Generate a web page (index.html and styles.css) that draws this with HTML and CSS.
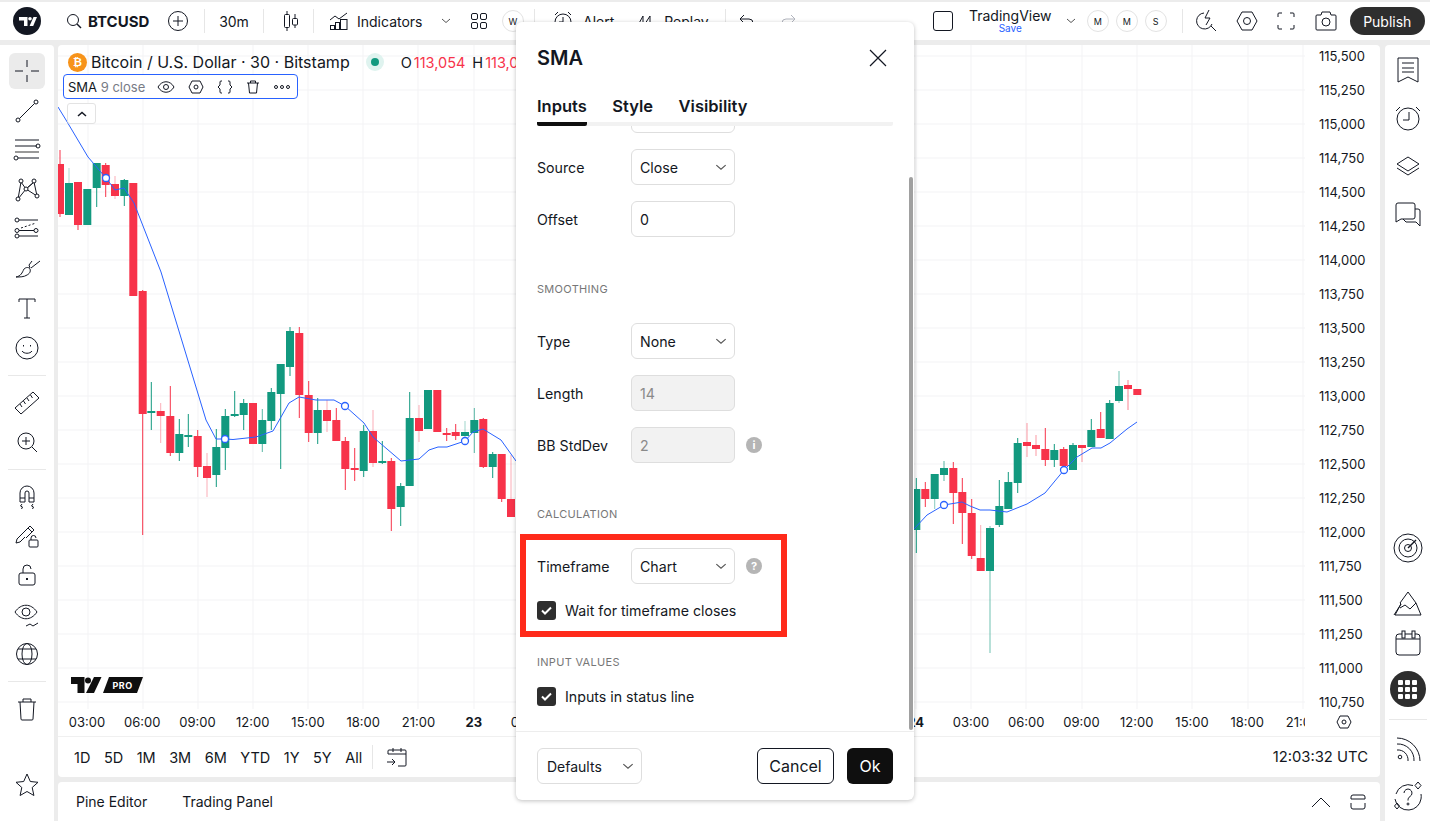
FILE: index.html
```html
<!DOCTYPE html>
<html lang="en">
  <head>
    <meta charset="UTF-8" />
    <title>BTCUSD SMA settings</title>
    <link rel="stylesheet" href="styles.css">
  </head>
  <body>
    <header class="topbar">
      <div class="logo">
        <svg width="28" height="28" viewBox="0 0 28 28"><circle cx="14" cy="14" r="14" fill="#131722"/><path d="M6 10h8.5v9H11v-5.500H6z" fill="#fff"/><circle cx="17" cy="11.800" r="1.800" fill="#fff"/><path d="M20.500 10H24l-3.800 9h-3.600z" fill="#fff"/></svg>
      </div>
      <div class="symbol">
        <svg class="ico" width="16" height="16" viewBox="0 0 16 16"><circle cx="7" cy="7" r="5.500"/><path d="M11 11l4 4" stroke-width="1.500"/></svg>
        <span>BTCUSD</span>
      </div>
      <div class="tb-btn add">
        <svg class="ico" width="22" height="22" viewBox="0 0 22 22"><circle cx="11" cy="11" r="9.500"/><path d="M11 6v10M6 11h10"/></svg>
      </div>
      <i class="sep sep-a"></i>
      <div class="tb-btn interval">30m</div>
      <i class="sep"></i>
      <div class="tb-btn candles">
        <svg class="ico" width="18" height="22" viewBox="0 0 18 22"><path d="M5 1v3M5 18v3M13 4v4M13 15v3"/><rect x="2.500" y="4.500" width="5" height="13" rx="1"/><rect x="10.500" y="8.500" width="5" height="6.500" rx="1"/></svg>
      </div>
      <i class="sep"></i>
      <div class="indicators">
        <svg class="ico" width="20" height="20" viewBox="0 0 20 20"><path d="M1 9l5-4 4 3 8-6"/><rect x="1.500" y="14.500" width="4" height="4"/><rect x="6.500" y="11.500" width="4" height="7"/><rect x="11.500" y="8.500" width="6.500" height="10"/></svg>
        <span>Indicators</span>
        <svg class="ico chev" width="10" height="6" viewBox="0 0 10 6"><path d="M1 1l4 3.500L9 1"/></svg>
      </div>
      <div class="tb-btn layouts">
        <svg class="ico" width="20" height="20" viewBox="0 0 20 20"><rect x="2.500" y="2.500" width="6" height="6" rx="1.500"/><rect x="11.500" y="2.500" width="6" height="6" rx="1.500"/><rect x="2.500" y="11.500" width="6" height="6" rx="1.500"/><rect x="11.500" y="11.500" width="6" height="6" rx="1.500"/></svg>
      </div>
      <div class="round-tag tag-w">W</div>
      <i class="sep sep-b"></i>
      <div class="action alert">
        <svg class="ico" width="22" height="22" viewBox="0 0 22 22"><circle cx="11" cy="12" r="8"/><path d="M11 7v5H7M3 5l3-3M19 5l-3-3"/></svg>
        <span>Alert</span>
      </div>
      <div class="action replay">
        <svg class="ico" width="18" height="18" viewBox="0 0 18 18"><path d="M2 15L8 4v11l7-11v11"/></svg>
        <span>Replay</span>
      </div>
      <i class="sep sep-c"></i>
      <div class="tb-btn undo">
        <svg class="ico" width="18" height="18" viewBox="0 0 18 18"><path d="M6 3L2 7l4 4M2 7h9a4 4 0 0 1 0 8H8"/></svg>
      </div>
      <div class="tb-btn redo">
        <svg class="ico faint" width="18" height="18" viewBox="0 0 18 18"><path d="M12 3l4 4-4 4M16 7H7a4 4 0 0 0 0 8h3"/></svg>
      </div>

      <div class="layout-box"></div>
      <div class="layout-name">
        <span>TradingView</span>
        <small>Save</small>
      </div>
      <svg class="ico chev layout-chev" width="10" height="6" viewBox="0 0 10 6"><path d="M1 1l4 3.500L9 1"/></svg>
      <div class="round-tag">M</div>
      <div class="round-tag">M</div>
      <div class="round-tag">S</div>
      <i class="sep sep-d"></i>
      <div class="tb-icons">
        <svg class="ico" width="22" height="24" viewBox="0 0 22 24"><path d="M8 4a8 8 0 1 0 8 11M13 1l-4 8h5l-4 7M15 17l5 5"/></svg>
        <svg class="ico" width="22" height="24" viewBox="0 0 22 24"><path d="M6 3h10l5 9-5 9H6l-5-9z"/><circle cx="11" cy="12" r="3.500"/></svg>
        <svg class="ico" width="20" height="20" viewBox="0 0 20 20"><path d="M2 6V3a1 1 0 0 1 1-1h3M14 2h3a1 1 0 0 1 1 1v3M18 14v3a1 1 0 0 1-1 1h-3M6 18H3a1 1 0 0 1-1-1v-3"/></svg>
        <svg class="ico" width="24" height="24" viewBox="0 0 24 24"><path d="M3 6h4l1-3h8l1 3h4a1 1 0 0 1 1 1v13a1 1 0 0 1-1 1H3a1 1 0 0 1-1-1V7a1 1 0 0 1 1-1z"/><circle cx="12" cy="13" r="4"/></svg>
      </div>
      <button class="publish">Publish</button>
    </header>

    <div class="main">
      <nav class="left-bar">
        <div class="tool active">
          <svg class="ico" width="28" height="28" viewBox="0 0 28 28"><path d="M14 3v7M14 18v7M2 14h8M18 14h8"/></svg>
        </div>
        <div class="tool">
          <svg class="ico" width="28" height="28" viewBox="0 0 28 28"><circle cx="5" cy="23" r="2"/><circle cx="23" cy="5" r="2"/><path d="M6.500 21.500l15-15"/></svg>
        </div>
        <div class="tool">
          <svg class="ico" width="28" height="28" viewBox="0 0 28 28"><path d="M2 4h24M2 10h22M5 22h21"/><path d="M2 16h24" stroke="#777" stroke-width="1.500"/><circle cx="25" cy="10" r="2"/><circle cx="3" cy="22" r="2"/></svg>
        </div>
        <div class="tool">
          <svg class="ico" width="28" height="28" viewBox="0 0 28 28"><path d="M8 6l5 7L21 6l3 14M8 6L5 23l8-10 11 7M21 6l-8 7"/><circle cx="8" cy="5" r="2" fill="#fff"/><circle cx="21" cy="5" r="2" fill="#fff"/><circle cx="13" cy="13" r="2" fill="#fff"/><circle cx="5" cy="23" r="2" fill="#fff"/><circle cx="24" cy="20" r="2" fill="#fff"/></svg>
        </div>
        <div class="tool">
          <svg class="ico" width="28" height="28" viewBox="0 0 28 28"><path d="M6 5h19M6 15.500h15M6 21h19"/><path d="M8 13l15-5" stroke-dasharray="2 2"/><circle cx="4" cy="5" r="2"/><circle cx="4" cy="15.500" r="2"/><circle cx="23" cy="15.500" r="2"/><circle cx="4" cy="21" r="2"/></svg>
        </div>
        <div class="tool">
          <svg class="ico" width="28" height="28" viewBox="0 0 28 28"><path d="M3 22c5-1 6-4 8-8 2-2 5-2 6 0 1 3-1 5-3 6-3 2-7 2-11 2zM16 10l1 3M18 13l9-7M16 10l3-4"/></svg>
        </div>
        <div class="tool">
          <svg class="ico" width="28" height="28" viewBox="0 0 28 28"><path d="M6 8V5h16v3M14 5v19M11 24h6"/></svg>
        </div>
        <div class="tool">
          <svg class="ico" width="28" height="28" viewBox="0 0 28 28"><circle cx="14" cy="14" r="11"/><path d="M9 17c2 3 8 3 10 0M10.500 11v1.500M17.500 11v1.500"/></svg>
        </div>
        <hr class="bar-line" />
        <div class="tool">
          <svg class="ico" width="28" height="28" viewBox="0 0 28 28"><path d="M2 20L20 4l6 6-18 16zM7 16l2 3M10.500 13l2 3M14 10l2 3M17.500 7l2 3"/></svg>
        </div>
        <div class="tool">
          <svg class="ico" width="28" height="28" viewBox="0 0 28 28"><circle cx="13" cy="13" r="8"/><path d="M13 9v8M9 13h8M19 19l5 5"/></svg>
        </div>
        <hr class="bar-line" />
        <div class="tool">
          <svg class="ico" width="28" height="28" viewBox="0 0 28 28"><path d="M7 20V11a7 7 0 0 1 14 0v9h-5V11a2 2 0 0 0-4 0v9zM7 16h5M16 16h5M9 22l-1.500 2 2 1-1 2M20 22l-1.500 2 2 1-1 2"/></svg>
        </div>
        <div class="tool">
          <svg class="ico" width="28" height="28" viewBox="0 0 28 28"><path d="M3 21l1-4L17 4l4 4-8 8M3 21l4-1 5-5M15 6l4 4"/><rect x="16" y="18" width="9" height="7" rx="1"/><path d="M18 18v-2a2.500 2.500 0 0 1 5 0"/></svg>
        </div>
        <div class="tool">
          <svg class="ico" width="28" height="28" viewBox="0 0 28 28"><rect x="6" y="12" width="16" height="12" rx="2"/><path d="M10 12V8a4 4 0 0 1 8 0"/><path d="M14 17v2" stroke-width="2"/></svg>
        </div>
        <div class="tool">
          <svg class="ico" width="28" height="28" viewBox="0 0 28 28"><path d="M2 11c6-9 16-9 22 0-6 9-16 9-22 0z"/><circle cx="13" cy="11" r="4"/><path d="M13 25l4-2 3 2 5-3"/></svg>
        </div>
        <div class="tool">
          <svg class="ico" width="28" height="28" viewBox="0 0 28 28"><circle cx="14" cy="14" r="10.500"/><ellipse cx="14" cy="14" rx="5" ry="10.500"/><path d="M5 9h18M5 19h18"/></svg>
        </div>
        <hr class="bar-line" />
        <div class="tool">
          <svg class="ico" width="28" height="28" viewBox="0 0 28 28"><path d="M5 7h18M10 7V4h8v3M7 7l1 17a1 1 0 0 0 1 1h10a1 1 0 0 0 1-1l1-17"/></svg>
        </div>
        <div class="tool star">
          <svg class="ico" width="28" height="28" viewBox="0 0 28 28"><path d="M14 3l3.300 7.500 7.700.8-5.800 5.200 1.700 8L14 20.500 7.100 24.500l1.700-8L3 11.300l7.700-.8z"/></svg>
        </div>
      </nav>

      <div class="center">
        <section class="chart-card">
          <div class="chart-row">
            <div class="plot">
              <svg id="chart" class="chart-svg" width="1247" height="664" viewBox="58 45 1247 664"></svg>

              <div class="legend-title">
                <span class="coin">₿</span>
                <span class="pair">Bitcoin / U.S. Dollar · 30 · Bitstamp</span>
                <span class="live"><i></i></span>
                <span class="ohlc">O<b>113,054</b></span>
                <span class="ohlc">H<b>113,054</b></span>
              </div>

              <div class="study-chip">
                <span class="study-name">SMA <em>9 close</em></span>
                <svg class="ico" width="18" height="14" viewBox="0 0 18 14"><path d="M1 7c4-7 12-7 16 0-4 7-12 7-16 0z"/><circle cx="9" cy="7" r="2.500"/></svg>
                <svg class="ico" width="16" height="14" viewBox="0 0 16 14"><path d="M4 1h8l3 6-3 6H4L1 7z"/><circle cx="8" cy="7" r="2"/></svg>
                <svg class="ico" width="16" height="14" viewBox="0 0 16 14"><path d="M5 1H4a1 1 0 0 0-1 1v3L1 7l2 2v3a1 1 0 0 0 1 1h1M11 1h1a1 1 0 0 1 1 1v3l2 2-2 2v3a1 1 0 0 1-1 1h-1"/></svg>
                <svg class="ico" width="14" height="14" viewBox="0 0 14 14"><path d="M1 3h12M4.500 3V1h5v2M2.500 3l1 10h7l1-10"/></svg>
                <svg class="ico" width="18" height="14" viewBox="0 0 18 14"><circle cx="3" cy="7" r="1.500"/><circle cx="9" cy="7" r="1.500"/><circle cx="15" cy="7" r="1.500"/></svg>
              </div>

              <div class="collapse">
                <svg class="ico" width="10" height="6" viewBox="0 0 10 6"><path d="M1 5l4-3.500L9 5" stroke-width="1.500"/></svg>
              </div>

              <svg class="tv-pro" width="72" height="16" viewBox="0 0 72 16">
                <path d="M0 0h13.500v16H6.500V7H0z"/>
                <circle cx="17" cy="3.500" r="3"/>
                <path d="M23 0h7.500L23 16h-8zM38 0h34l-6 16H32z"/>
                <text x="51.500" y="11.500" text-anchor="middle">PRO</text>
              </svg>
            </div>

            <div class="price-scale">
              <span>115,500</span><span>115,250</span><span>115,000</span><span>114,750</span>
              <span>114,500</span><span>114,250</span><span>114,000</span><span>113,750</span>
              <span>113,500</span><span>113,250</span><span>113,000</span><span>112,750</span>
              <span>112,500</span><span>112,250</span><span>112,000</span><span>111,750</span>
              <span>111,500</span><span>111,250</span><span>111,000</span><span>110,750</span>
            </div>
          </div>

          <div class="time-row">
            <div class="time-labels">
              <span>03:00</span><span>06:00</span><span>09:00</span><span>12:00</span>
              <span>15:00</span><span>18:00</span><span>21:00</span><span class="day">23</span>
              <span>03:00</span><span>06:00</span><span>09:00</span><span>12:00</span>
              <span>15:00</span><span>18:00</span><span>21:00</span><span class="day">24</span>
              <span>03:00</span><span>06:00</span><span>09:00</span><span>12:00</span>
              <span>15:00</span><span>18:00</span><span>21:00</span>
            </div>
            <div class="axis-gear">
              <svg class="ico" width="16" height="14" viewBox="0 0 16 14"><path d="M4 1h8l3 6-3 6H4L1 7z"/><circle cx="8" cy="7" r="2"/></svg>
            </div>
          </div>

          <div class="range-row">
            <span>1D</span><span>5D</span><span>1M</span><span>3M</span><span>6M</span>
            <span>YTD</span><span>1Y</span><span>5Y</span><span>All</span>
            <i class="range-sep"></i>
            <svg class="ico" width="22" height="22" viewBox="0 0 22 22"><path d="M2 8V5a1 1 0 0 1 1-1h16a1 1 0 0 1 1 1v14a1 1 0 0 1-1 1h-7M2 8h18M7 2v4M15 2v4M1 16h8M6 13l3 3-3 3"/></svg>
            <span class="clock">12:03:32 UTC</span>
          </div>
        </section>

        <section class="bottom-panel">
          <span>Pine Editor</span>
          <span>Trading Panel</span>
          <div class="panel-icons">
            <svg class="ico" width="20" height="12" viewBox="0 0 20 12"><path d="M1 11l9-9 9 9"/></svg>
            <svg class="ico" width="18" height="16" viewBox="0 0 18 16"><path d="M4 1h10a2 2 0 0 1 2 2v2H2V3a2 2 0 0 1 2-2zM2 9v4a2 2 0 0 0 2 2h10a2 2 0 0 0 2-2V9"/></svg>
          </div>
        </section>
      </div>

      <aside class="right-bar">
        <div class="side">
          <svg class="ico" width="24" height="26" viewBox="0 0 24 26"><path d="M2 1h20v24l-10-5-10 5zM6 6h12M6 11h12M6 15h12"/></svg>
        </div>
        <div class="side">
          <svg class="ico" width="28" height="28" viewBox="0 0 28 28"><circle cx="14" cy="15" r="11"/><path d="M15 8v8H9M2 7l4-4M26 7l-4-4"/></svg>
        </div>
        <div class="side">
          <svg class="ico" width="28" height="24" viewBox="0 0 28 24"><path d="M14 3l11 7-11 7-11-7zM3 14l11 7 11-7"/></svg>
        </div>
        <div class="side">
          <svg class="ico" width="28" height="28" viewBox="0 0 28 28"><path d="M2 22V5a2 2 0 0 1 2-2h15a2 2 0 0 1 2 2v12a2 2 0 0 1-2 2H7zM21 9h3a2 2 0 0 1 2 2v15l-4-4H12l-3-3"/></svg>
        </div>
        <div class="side side-low">
          <svg class="ico" width="30" height="30" viewBox="0 0 30 30"><circle cx="15" cy="15" r="14"/><circle cx="15" cy="15" r="9"/><circle cx="15" cy="15" r="3.500"/><path d="M15 15l8-8" stroke-width="1.500"/></svg>
        </div>
        <div class="side side-tight mountain">
          <svg class="ico" width="30" height="26" viewBox="0 0 30 26"><path d="M1 25L8 14l-1-1L15 2l8 11-6 6-5-4-5 3M8 14l-6 11h26l-5-12"/></svg>
        </div>
        <div class="side side-tight">
          <svg class="ico" width="28" height="28" viewBox="0 0 28 28"><rect x="2" y="5" width="24" height="21" rx="3"/><path d="M2 10h24"/><rect x="8" y="2" width="3" height="7" fill="#fff"/><rect x="18" y="2" width="3" height="7" fill="#fff"/></svg>
        </div>
        <div class="apps">
          <i></i><i></i><i></i><i></i><i></i><i></i><i></i><i></i><i></i>
        </div>
        <hr class="bar-line side-line" />
        <div class="side">
          <svg class="ico" width="26" height="26" viewBox="0 0 26 26"><circle cx="5" cy="21" r="1.800"/><path d="M2 14a10 10 0 0 1 11 11M2 8a16 16 0 0 1 17 17M2 2a23 23 0 0 1 23 23"/></svg>
        </div>
        <div class="side">
          <svg class="ico" width="32" height="32" viewBox="0 0 32 32"><path d="M21 4.500A13 13 0 0 0 4 13M3 18a13 13 0 0 0 14 11 13 13 0 0 0 12-11 13 13 0 0 0 0-5"/><path d="M12 12a4 4 0 1 1 6 3.500c-1.500 1-2 2-2 4"/><circle cx="16" cy="23" r="1"/><path d="M26 1l3 3.500-3 3.500-3-3.500zM5 22l2.500 3L5 28l-2.500-3z"/></svg>
        </div>
      </aside>
    </div>

    <div class="dialog">
      <div class="dialog-head">
        <h2>SMA</h2>
        <svg class="ico" width="18" height="18" viewBox="0 0 18 18"><path d="M1 1l16 16M17 1L1 17" stroke-width="1.200"/></svg>
      </div>
      <div class="tabs">
        <span class="tab on">Inputs</span>
        <span class="tab">Style</span>
        <span class="tab">Visibility</span>
      </div>
      <div class="dialog-body">
        <div class="field-row clipped">
          <div class="field"></div>
        </div>
        <div class="field-row">
          <label>Source</label>
          <div class="field">Close<svg class="ico chev" width="10" height="6" viewBox="0 0 10 6"><path d="M1 1l4 3.500L9 1"/></svg></div>
        </div>
        <div class="field-row">
          <label>Offset</label>
          <div class="field">0</div>
        </div>
        <div class="section-title smoothing">Smoothing</div>
        <div class="field-row">
          <label>Type</label>
          <div class="field">None<svg class="ico chev" width="10" height="6" viewBox="0 0 10 6"><path d="M1 1l4 3.500L9 1"/></svg></div>
        </div>
        <div class="field-row">
          <label>Length</label>
          <div class="field disabled">14</div>
        </div>
        <div class="field-row">
          <label>BB StdDev</label>
          <div class="field disabled">2</div>
          <span class="hint">i</span>
        </div>
        <div class="section-title calculation">Calculation</div>
        <div class="field-row">
          <label>Timeframe</label>
          <div class="field">Chart<svg class="ico chev" width="10" height="6" viewBox="0 0 10 6"><path d="M1 1l4 3.500L9 1"/></svg></div>
          <span class="hint">?</span>
        </div>
        <div class="check-row">
          <span class="check"><svg width="11" height="9" viewBox="0 0 11 9"><path d="M1 4.500l3 3 6-6"/></svg></span>
          Wait for timeframe closes
        </div>
        <div class="section-title values">Input values</div>
        <div class="check-row">
          <span class="check"><svg width="11" height="9" viewBox="0 0 11 9"><path d="M1 4.500l3 3 6-6"/></svg></span>
          Inputs in status line
        </div>
      </div>
      <div class="dialog-foot">
        <div class="field defaults">Defaults<svg class="ico chev" width="10" height="6" viewBox="0 0 10 6"><path d="M1 1l4 3.500L9 1"/></svg></div>
        <button class="btn-cancel">Cancel</button>
        <button class="btn-ok">Ok</button>
      </div>
      <div class="scroll-thumb"></div>
      <div class="red-box"></div>
    </div>

    <script src="chart.js"></script>
  </body>
</html>
```

FILE: styles.css
```css
* {
  margin: 0;
  padding: 0;
  box-sizing: border-box;
  font-family: Inter, "Liberation Sans", sans-serif;
}

body {
  position: relative;
  width: 1430px;
  height: 821px;
  overflow: hidden;
  padding-top: 2px;
  background-color: #ececec;
  color: #131722;
  font-size: 14px;
}

.ico {
  display: block;
  flex: none;
  fill: none;
  stroke: #131722;
  stroke-width: 1;
}

.faint {
  stroke: #b2b5be;
}

/* top toolbar */
.topbar {
  display: flex;
  align-items: center;
  height: 38px;
  margin-bottom: 5px;
  background-color: white;
  white-space: nowrap;
}

.logo {
  display: flex;
  justify-content: center;
  flex: none;
  width: 54px;
}

.symbol {
  display: flex;
  align-items: center;
  gap: 6px;
  flex: none;
  width: 110px;
  padding-left: 12px;
  font-size: 15px;
  font-weight: 700;
}

.tb-btn {
  display: flex;
  align-items: center;
  justify-content: center;
  flex: none;
}

.add {
  width: 28px;
}

.sep {
  flex: none;
  width: 1px;
  height: 24px;
  background-color: #e6e6e6;
}

.sep-a {
  margin-left: 12px;
}

.interval {
  width: 58px;
}

.candles {
  width: 49px;
  padding-left: 4px;
}

.indicators {
  display: flex;
  align-items: center;
  flex: none;
  width: 149px;
  padding-left: 15px;
}

.indicators span {
  margin-left: 8px;
}

.indicators .chev {
  margin-left: 18px;
}

.chev {
  stroke: #555;
}

.layouts {
  width: 20px;
  margin-left: 6px;
}

.round-tag {
  display: flex;
  align-items: center;
  justify-content: center;
  flex: none;
  width: 22px;
  height: 22px;
  margin-left: 7px;
  border: 1px solid #e3e3e3;
  border-radius: 50%;
  font-size: 9px;
}

.tag-w {
  margin-left: 13px;
}

.sep-b {
  margin-left: 10px;
}

.action {
  display: flex;
  align-items: center;
  flex: none;
}

.alert {
  gap: 9px;
  margin-left: 17px;
}

.replay {
  gap: 11px;
  margin-left: 21px;
}

.sep-c {
  margin-left: 16px;
}

.undo,
.redo {
  width: 18px;
}

.undo {
  margin-left: 12px;
}

.redo {
  margin-left: 23px;
}

.layout-box {
  flex: none;
  width: 20px;
  height: 20px;
  margin-left: 136px;
  border: 1px solid #131722;
  border-radius: 3px;
}

.layout-name {
  display: flex;
  flex-direction: column;
  align-items: center;
  flex: none;
  width: 83px;
  margin-left: 16px;
  line-height: 15px;
}

.layout-name small {
  color: #2962ff;
  font-size: 10px;
  line-height: 11px;
}

.layout-chev {
  margin-left: 14px;
  margin-right: 5px;
}

.layout-name + .layout-chev + .round-tag {
  margin-left: 6px;
}

.sep-d {
  margin-left: 15px;
}

.tb-icons {
  display: flex;
  align-items: center;
  justify-content: space-between;
  flex: none;
  width: 142px;
  margin-left: 13px;
}

.publish {
  flex: none;
  width: 75px;
  height: 28px;
  margin-left: 12px;
  border: none;
  border-radius: 14px;
  background-color: #2e2e2e;
  color: white;
  font-size: 14px;
}

/* page columns */
.main {
  display: flex;
  height: 776px;
}

.left-bar {
  display: flex;
  flex-direction: column;
  align-items: center;
  flex: none;
  width: 54px;
  margin-right: 4px;
  padding: 6px 0 16px;
  background-color: white;
  border-top-right-radius: 4px;
}

.tool {
  display: flex;
  align-items: center;
  justify-content: center;
  flex: none;
  width: 36px;
  height: 39.500px;
}

.tool.active {
  height: 36px;
  margin: 2px 0;
  background-color: #ebebeb;
  border-radius: 6px;
}

.star {
  margin-top: auto;
}

.bar-line {
  flex: none;
  width: 38px;
  height: 1px;
  margin: 7px 0;
  border: none;
  background-color: #e8e8e8;
}

.center {
  display: flex;
  flex-direction: column;
  flex: none;
  width: 1322px;
  margin-right: 5px;
}

.chart-card {
  flex: none;
  height: 732px;
  background-color: white;
  border-radius: 4px;
  overflow: hidden;
}

.chart-row {
  display: flex;
  height: 664px;
}

.plot {
  position: relative;
  flex: none;
  width: 1247px;
  height: 664px;
}

.chart-svg {
  display: block;
}

.legend-title {
  position: absolute;
  left: 10px;
  top: 7px;
  display: flex;
  align-items: center;
  white-space: nowrap;
}

.coin {
  display: flex;
  align-items: center;
  justify-content: center;
  width: 19px;
  height: 19px;
  border-radius: 50%;
  background-color: #f7931a;
  color: white;
  font-family: "DejaVu Sans", sans-serif;
  font-size: 11px;
  font-weight: 700;
}

.pair {
  margin-left: 4px;
  font-size: 16px;
}

.live {
  display: flex;
  align-items: center;
  justify-content: center;
  width: 18px;
  height: 18px;
  margin-left: 16px;
  border-radius: 50%;
  background-color: #dff3ef;
}

.live i {
  width: 8px;
  height: 8px;
  border-radius: 50%;
  background-color: #12997f;
}

.ohlc {
  margin-left: 7px;
  font-size: 14.500px;
}

.live + .ohlc {
  margin-left: 17px;
}

.ohlc b {
  margin-left: 2px;
  color: #f7334a;
  font-weight: 400;
}

.study-chip {
  position: absolute;
  left: 5px;
  top: 29px;
  display: flex;
  align-items: center;
  width: 235px;
  height: 25px;
  padding-left: 4px;
  gap: 13px;
  background-color: white;
  border: 1px solid #2962ff;
  border-radius: 4px;
}

.study-name {
  margin-right: -1px;
  font-size: 13px;
  white-space: nowrap;
}

.study-name em {
  color: #787b86;
  font-style: normal;
}

.collapse {
  position: absolute;
  left: 9px;
  top: 58px;
  display: flex;
  align-items: center;
  justify-content: center;
  width: 29px;
  height: 21px;
  background-color: white;
  border: 1px solid #e3e3e3;
  border-radius: 3px;
}

.tv-pro {
  position: absolute;
  left: 13px;
  top: 632px;
  fill: #0f0f0f;
}

.tv-pro text {
  fill: white;
  font-size: 9px;
  font-weight: 700;
  letter-spacing: 0.5px;
}

.price-scale {
  display: flex;
  flex-direction: column;
  flex: 1;
  height: 664px;
  margin-top: -6px;
  padding-left: 14px;
  font-size: 13px;
}

.price-scale span {
  flex: none;
  height: 34px;
  line-height: 34px;
}

.time-row {
  display: flex;
  height: 28px;
  border-bottom: 1px solid #f0f0f0;
}

.time-labels {
  display: flex;
  flex: none;
  width: 1247px;
  padding-left: 1.400px;
  overflow: hidden;
  line-height: 26px;
  font-size: 13px;
  white-space: nowrap;
}

.time-labels span {
  flex: none;
  width: 55.250px;
  text-align: center;
}

.time-labels .day {
  font-weight: 700;
}

.axis-gear {
  display: flex;
  align-items: center;
  justify-content: center;
  flex: 1;
  padding: 0 0 2px 3px;
}

.range-row {
  display: flex;
  align-items: center;
  gap: 13.500px;
  height: 40px;
  padding: 0 12px 0 16px;
  font-size: 14.500px;
}

.range-sep {
  width: 1px;
  height: 24px;
  margin-left: -4px;
  background-color: #e6e6e6;
}

.clock {
  margin-left: auto;
  font-size: 14.800px;
}

.bottom-panel {
  display: flex;
  align-items: center;
  gap: 35px;
  flex: none;
  height: 39px;
  margin-top: 5px;
  padding: 0 13px 0 18px;
  background-color: white;
  border-radius: 4px 4px 0 0;
}

.panel-icons {
  display: flex;
  align-items: center;
  gap: 18px;
  margin-left: auto;
}

.right-bar {
  display: flex;
  flex-direction: column;
  align-items: center;
  flex: none;
  width: 45px;
  padding-top: 1px;
  background-color: white;
  border-top-left-radius: 4px;
}

.side {
  display: flex;
  align-items: center;
  justify-content: center;
  flex: none;
  width: 45px;
  height: 48px;
}

.side-tight {
  height: 40px;
}

.side-low {
  margin-top: 286px;
}

.mountain {
  margin-top: 11px;
}

.apps {
  display: grid;
  grid-template-columns: repeat(3, 5px);
  gap: 2px;
  align-content: center;
  justify-content: center;
  flex: none;
  width: 36px;
  height: 36px;
  margin-top: 8px;
  border-radius: 50%;
  background-color: #2e2e2e;
}

.apps i {
  width: 5px;
  height: 5px;
  border-radius: 1px;
  background-color: white;
}

.side-line {
  margin: 12px 0 5px;
}

/* SMA settings dialog */
.dialog {
  position: absolute;
  left: 516px;
  top: 22px;
  display: flex;
  flex-direction: column;
  width: 398px;
  height: 778px;
  background-color: white;
  border-radius: 6px;
  box-shadow: 0 1px 4px rgba(0, 0, 0, 0.25);
}

.dialog-head {
  display: flex;
  align-items: center;
  justify-content: space-between;
  flex: none;
  height: 72px;
  padding: 0 27px 0 21px;
}

.dialog-head h2 {
  font-size: 20px;
  font-weight: 600;
}

.tabs {
  display: flex;
  gap: 25.500px;
  flex: none;
  height: 32px;
  margin: 0 21px;
  border-bottom: 4px solid #f2f2f2;
  border-radius: 2px;
}

.tab {
  height: 32px;
  line-height: 24px;
  font-size: 16.500px;
  font-weight: 600;
}

.tab.on {
  border-bottom: 4px solid #0f0f0f;
  border-radius: 2px;
}

.dialog-body {
  flex: none;
  height: 605px;
  padding: 0 21px;
  overflow: hidden;
  font-size: 14.200px;
}

.field-row {
  display: flex;
  align-items: center;
  height: 36px;
  margin-bottom: 16px;
}

.clipped {
  margin-top: -29px;
  padding-left: 94px;
}

.field-row label {
  flex: none;
  width: 94px;
}

.field {
  display: flex;
  align-items: center;
  justify-content: space-between;
  flex: none;
  width: 104px;
  height: 36px;
  padding: 0 7px 0 8px;
  background-color: white;
  border: 1px solid #dedede;
  border-radius: 6px;
}

.field .chev {
  width: 12px;
  height: 7px;
}

.field.disabled {
  background-color: #f2f2f2;
  color: #8a8a8a;
}

.hint {
  display: flex;
  align-items: center;
  justify-content: center;
  width: 16px;
  height: 16px;
  margin-left: 11px;
  border-radius: 50%;
  background-color: #b5b5b5;
  color: white;
  font-size: 11px;
  font-weight: 700;
}

.section-title {
  height: 16px;
  color: #777;
  font-size: 11px;
  line-height: 16px;
  letter-spacing: 0.3px;
  text-transform: uppercase;
}

.smoothing {
  margin-top: 44px;
  margin-bottom: 26px;
}

.calculation {
  margin-top: 43px;
  margin-bottom: 26px;
}

.values {
  margin-top: 34px;
  margin-bottom: 16px;
}

.check-row {
  display: flex;
  align-items: center;
  gap: 9px;
  height: 20px;
}

.check {
  display: flex;
  align-items: center;
  justify-content: center;
  width: 19px;
  height: 19px;
  border-radius: 3px;
  background-color: #2e2e2e;
}

.check svg {
  fill: none;
  stroke: white;
  stroke-width: 2;
}

.dialog-foot {
  display: flex;
  align-items: flex-start;
  flex: 1;
  padding: 16px 21px 0;
  border-top: 1px solid #ededed;
}

.defaults {
  width: 105px;
  padding-left: 9px;
}

.btn-cancel,
.btn-ok {
  height: 36px;
  border-radius: 6px;
  font-size: 16px;
}

.btn-cancel {
  width: 77px;
  margin-left: auto;
  background-color: white;
  border: 1px solid #131722;
  color: #131722;
}

.btn-ok {
  width: 46px;
  margin-left: 13px;
  background-color: #0f0f0f;
  border: none;
  color: white;
}

.scroll-thumb {
  position: absolute;
  left: 393px;
  top: 155px;
  width: 4px;
  height: 553px;
  border-radius: 2px;
  background-color: #a0a0a0;
}

.red-box {
  position: absolute;
  left: 4px;
  top: 512px;
  width: 267px;
  height: 103px;
  border: 6px solid #ff2a1a;
}
```

FILE: chart.js
```js
const chart = document.getElementById("chart");

const RED = "#f7334a";
const GREEN = "#12997f";

const gridX = [88, 143, 198, 253, 308, 363, 418, 474, 529, 584, 640, 695, 750, 805, 860, 916, 971, 1026, 1082, 1137, 1192, 1248, 1303];

// x, wick top, wick bottom, body top, body bottom, colour, wick opacity
const candles = [
  [60, 150, 217, 164, 214, "r"],
  [69, 168, 215, 183, 215, "g", 0.35],
  [78, 182, 230, 182, 225, "r"],
  [87.3, 189, 225, 189, 225, "g"],
  [96.7, 163, 207, 163, 188, "g"],
  [105.7, 163, 197, 165, 185, "r"],
  [115, 176, 199, 184, 196, "r", 0.4],
  [124.3, 179, 206, 180, 196, "g"],
  [133.3, 183, 296, 183, 296, "r"],
  [142.7, 290, 535, 291, 414, "r"],
  [151.3, 382, 430, 411, 413, "g"],
  [160.7, 403, 443, 411, 416, "r", 0.4],
  [170.3, 386, 456, 416, 453, "r"],
  [179.3, 419, 461, 434, 453, "g"],
  [188.3, 414, 447, 435, 437, "g"],
  [197.7, 430, 477, 436, 467, "r"],
  [207, 453, 497, 466, 478, "r", 0.4],
  [216.3, 429, 487, 447, 475, "g"],
  [225.3, 409, 470, 416, 448, "g"],
  [234.7, 391, 417, 414, 416, "g"],
  [243.7, 399, 430, 403, 415, "g"],
  [253, 403, 444, 403, 444, "r"],
  [262.3, 409, 452, 420, 444, "g", 0.7],
  [271.3, 388, 430, 392, 421, "g"],
  [280.7, 364, 469, 364, 394, "g"],
  [290, 327, 376, 331, 367, "g"],
  [299.3, 327, 418, 333, 395, "r"],
  [308.7, 381, 442, 395, 433, "r"],
  [317.7, 398, 444, 410, 433, "g"],
  [327, 400, 432, 410, 421, "r", 0.4],
  [336.3, 408, 441, 420, 441, "r"],
  [345.3, 437, 490, 441, 469, "r"],
  [354.7, 448, 481, 468, 470, "r"],
  [363.7, 425, 477, 431, 471, "g"],
  [373, 410, 467, 431, 463, "r", 0.4],
  [382.3, 441, 464, 461, 463, "g"],
  [391.3, 458, 531, 461, 509, "r"],
  [400.7, 483, 526, 486, 507, "g"],
  [409.7, 392, 486, 418, 486, "g"],
  [419, 405, 442, 418, 431, "r", 0.4],
  [428, 390, 429, 390, 429, "g"],
  [437.3, 390, 432, 390, 432, "r"],
  [446.7, 428, 441, 433, 435, "r"],
  [455.7, 424, 440, 432, 436, "r"],
  [465, 421, 444, 432, 436, "g", 0.4],
  [474.3, 408, 453, 420, 433, "g", 0.7],
  [483.3, 418, 468, 419, 467, "r"],
  [492.7, 452, 478, 454, 467, "g"],
  [501.7, 454, 502, 454, 499, "r"],
  [511, 455, 517, 499, 517, "r", 0.4],
  [916.3, 478, 553, 489, 530, "g"],
  [925.3, 482, 507, 489, 499, "r"],
  [934.7, 474, 509, 474, 499, "g", 0.5],
  [944, 461, 481, 468, 475, "g", 0.7],
  [953.3, 462, 524, 468, 493, "r"],
  [962.3, 478, 544, 492, 513, "r"],
  [971.7, 499, 559, 513, 556, "r"],
  [980.7, 525, 571, 558, 571, "r", 0.4],
  [990, 526, 653, 528, 571, "g", 0.6],
  [999.3, 480, 527, 506, 525, "g"],
  [1008.3, 472, 509, 482, 509, "g"],
  [1017.7, 438, 493, 443, 483, "g"],
  [1027, 423, 457, 442, 446, "r", 0.5],
  [1036, 435, 456, 445, 449, "r", 0.5],
  [1045.3, 428, 466, 449, 460, "r"],
  [1054.3, 444, 467, 450, 460, "g"],
  [1063.7, 447, 467, 449, 466, "r"],
  [1073, 443, 470, 445, 470, "g"],
  [1082, 445, 462, 445, 448, "r", 0.5],
  [1091.3, 419, 447, 430, 447, "g"],
  [1100.7, 412, 438, 429, 438, "r"],
  [1109.7, 400, 439, 403, 439, "g"],
  [1119, 371, 403, 386, 401, "g", 0.6],
  [1128, 380, 410, 385, 389, "r", 0.6],
  [1137.3, 389, 395, 389, 395, "r"],
];

const smaLine = [
  [58, 107], [66, 120], [88, 157], [106, 178], [115, 190], [124, 188], [134, 203], [161, 272], [206, 420],
  [216, 439], [225, 439], [233, 439.5], [256, 437], [273, 431], [289, 403], [299, 397], [316, 400], [334, 400],
  [345, 406], [364, 423], [373, 437], [401, 461], [419, 459], [429, 450], [438, 447], [447, 447], [465, 441],
  [473, 432], [483, 429], [501, 440], [516, 461], [914, 529], [927, 515], [944, 505], [962, 502], [970, 506],
  [980, 510], [990, 510], [1007, 512], [1027, 504], [1045, 493], [1064, 470], [1077, 457], [1092, 448],
  [1101, 448], [1110, 443], [1127, 429], [1137, 422],
];

const smaMarkers = [[106, 178], [225, 439], [345, 406], [465, 441], [944, 505], [1064, 470]];

function drawGrid() {
  let out = "";
  for (let y = 56; y <= 702; y += 34) {
    out += `<line x1="58" x2="1305" y1="${y}" y2="${y}" stroke="#f3f3f5" />`;
  }
  gridX.forEach((x) => {
    out += `<line x1="${x}" x2="${x}" y1="45" y2="709" stroke="#f3f3f5" />`;
  });
  return out;
}

function drawCandles() {
  return candles
    .map(([x, wickTop, wickBottom, top, bottom, colour, wickOpacity]) => {
      const fill = colour === "r" ? RED : GREEN;
      return `
        <rect x="${x - 0.5}" y="${wickTop}" width="1" height="${wickBottom - wickTop}" fill="${fill}" opacity="${wickOpacity || 1}" />
        <rect x="${x - 4}" y="${top}" width="8" height="${bottom - top}" fill="${fill}" />`;
    })
    .join("");
}

function drawSma() {
  const points = smaLine.map((p) => p.join(",")).join(" ");
  const markers = smaMarkers
    .map(([x, y]) => `<circle cx="${x}" cy="${y}" r="3.500" fill="white" stroke="#2962ff" stroke-width="1.300" />`)
    .join("");
  return `<polyline points="${points}" fill="none" stroke="#2962ff" stroke-width="1" />${markers}`;
}

chart.innerHTML = drawGrid() + drawCandles() + drawSma();
```
